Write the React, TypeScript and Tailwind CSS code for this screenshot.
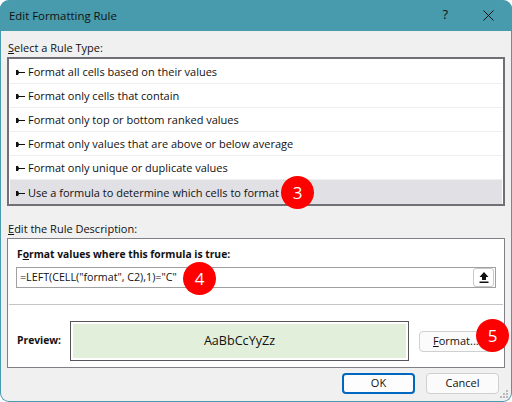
const rules = [
  'Format all cells based on their values',
  'Format only cells that contain',
  'Format only top or bottom ranked values',
  'Format only values that are above or below average',
  'Format only unique or duplicate values',
  'Use a formula to determine which cells to format',
];

const Badge = ({ n, className }: { n: number; className: string }) => (
  <div className={`absolute flex h-[33px] w-[33px] items-center justify-center rounded-full bg-[#fe0000] text-[17px] text-white ${className}`}>
    {n}
  </div>
);

const Bullet = () => (
  <svg width="9" height="5" viewBox="0 0 9 5" className="mr-[3px] shrink-0">
    <path d="M0 0h2l1 2h6v1H3L2 5H0z" fill="#111" />
  </svg>
);

export default function App() {
  return (
    <div className="relative h-[402px] w-[512px] overflow-hidden bg-white font-['Open_Sans','Noto_Sans',sans-serif] text-[11px] text-[#111]">
      <div className="flex h-[402px] flex-col rounded-[9px] border border-t-0 border-[#479bad] bg-[#f0f0f0]">
        <div className="-mx-px flex h-[31px] shrink-0 items-center rounded-t-[9px] bg-[#479bad] pl-[9px] pr-[18px] text-[11.4px]">
          <span className="flex-1">Edit Formatting Rule</span>
          <span className="mr-[35px] -mt-0.5 text-[13px]">?</span>
          <svg width="11" height="11" viewBox="0 0 11 11" className="-mt-px">
            <path d="M.5.5l10 10M10.500.5l-10 10" stroke="#111" strokeWidth="1" fill="none" />
          </svg>
        </div>

        <div className="flex flex-1 flex-col px-[6px]">
          <div className="h-[26px] pl-px pt-[9px] leading-[16px]"><u>S</u>elect a Rule Type:</div>
          <div className="h-[149px] border-2 border-[#6f6f75] bg-white p-px">
            {rules.map((r, i) => (
              <div
                key={r}
                className={`flex h-[24px] items-center pl-[6px] pt-[2px] ${i === 5 ? 'bg-[#e1e0e5]' : 'border-b border-[#eeeeee]'}`}
              >
                <Bullet />
                {r}
              </div>
            ))}
          </div>

          <div className="h-[32px] pl-px pt-[15px] leading-[16px]"><u>E</u>dit the Rule Description:</div>
          <div className="flex h-[130px] flex-col border border-[#7f7f85] bg-white px-[8px]">
            <div className="h-[28px] pl-px pt-[7px] text-[10.3px] font-bold leading-[16px]">F<u>o</u>rmat values where this formula is true:</div>
            <div className="flex h-[21px] items-center justify-between border border-[#a0a0a0] pl-[3px] pr-px">
              <span className="text-[10.7px]">=LEFT(CELL("format", C2),1)="C"</span>
              <div className="flex h-[19px] w-[21px] items-center justify-center rounded-[3px] border border-[#c8c8c8]">
                <svg width="10" height="11" viewBox="0 0 10 11">
                  <path d="M5 0L9.500 5H7v3H3V5H.5zM.5 9.500h9V11h-9z" fill="#111" />
                </svg>
              </div>
            </div>
            <div className="-mx-[7px] mt-[16px] border-t border-[#c4c4c4]" />
            <div className="flex items-center pt-[16px]">
              <span className="w-[54px] pl-px text-[10.3px] font-bold">Preview:</span>
              <div className="flex h-[40px] w-[339px] items-center justify-center border border-[#55555a] bg-white p-[2px]">
                <div className="flex h-full w-full items-center justify-center bg-[#e2efda] text-[12.6px]">AaBbCcYyZz</div>
              </div>
              <div className="ml-[10px] flex h-[21px] w-[75px] items-center rounded-[4px] border border-[#d0d0d0] bg-[#fbfbfb] pl-[13px]">
                <span><u>F</u>ormat...</span>
              </div>
            </div>
          </div>

          <div className="mt-[5px] flex justify-end gap-[11px] pr-[6px]">
            <div className="flex h-[21px] w-[73px] items-center justify-center rounded-[4px] border-2 border-[#0067c0] bg-[#fdfdfd]">OK</div>
            <div className="flex h-[21px] w-[73px] items-center justify-center rounded-[4px] border border-[#d0d0d0] bg-[#fbfbfb]">Cancel</div>
          </div>
        </div>
      </div>

      <svg width="10" height="10" viewBox="0 0 10 10" className="absolute bottom-[3px] right-[3px]">
        <path d="M7 1h2v2H7zM4 4h2v2H4zM7 4h2v2H7zM1 7h2v2H1zM4 7h2v2H4zM7 7h2v2H7z" fill="#b9b9b9" />
      </svg>

      <Badge n={3} className="left-[281px] top-[176px]" />
      <Badge n={4} className="left-[183px] top-[262px]" />
      <Badge n={5} className="left-[476px] top-[319px]" />
    </div>
  );
}
